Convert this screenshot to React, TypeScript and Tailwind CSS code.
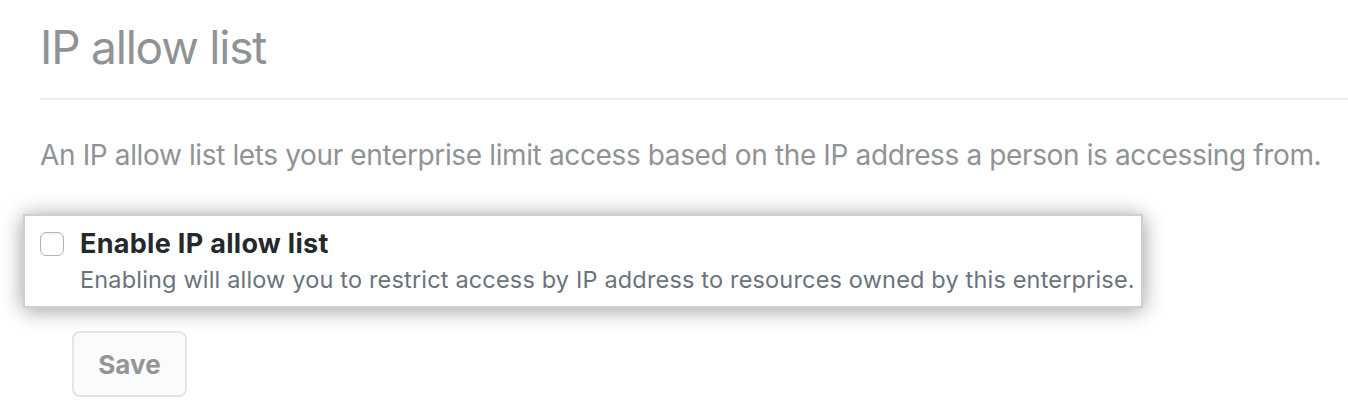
import React from "react";

export default function App() {
  return (
    <div
      className="w-[1348px] h-[416px] bg-white overflow-hidden"
      style={{ fontFamily: "Inter, 'Noto Sans', 'Liberation Sans', sans-serif" }}
    >
      <div className="pl-[40px] pt-[19px]">
        <h1 className="text-[46px] leading-[56px] font-normal text-[#8f9396] tracking-[-1.2px]">
          IP allow list
        </h1>
        <div className="mt-[23px] h-[2px] bg-[#eeeeee]" />
        <p className="mt-[37px] text-[28px] leading-[36px] text-[#909396] tracking-[-0.37px] whitespace-nowrap">
          An IP allow list lets your enterprise limit access based on the IP address a person is accessing from.
        </p>
        <div className="-ml-[17px] mt-[41px] w-[1120px] h-[94px] bg-white border-2 border-[#cfcfcf] shadow-[0_2px_20px_rgba(0,0,0,0.4)] flex pl-[15px] pt-[14px]">
          <div className="w-[24px] h-[24px] mt-[2px] rounded-[6px] border border-[#b5b5b5] bg-white shadow-[inset_0_1px_2px_rgba(0,0,0,0.08)]" />
          <div className="ml-[16px]">
            <div className="text-[27px] leading-[28px] font-bold text-[#24292e] tracking-[0.3px] whitespace-nowrap">
              Enable IP allow list
            </div>
            <div className="mt-[8px] text-[23.5px] leading-[28px] text-[#6a737d] tracking-[0.17px] whitespace-nowrap">
              Enabling will allow you to restrict access by IP address to resources owned by this enterprise.
            </div>
          </div>
        </div>
        <button className="ml-[32px] mt-[23px] w-[115px] h-[66px] rounded-[8px] border-2 border-[#e4e4e4] bg-[#fafbfc] text-[26px] font-bold text-[#959595]">
          Save
        </button>
      </div>
    </div>
  );
}
